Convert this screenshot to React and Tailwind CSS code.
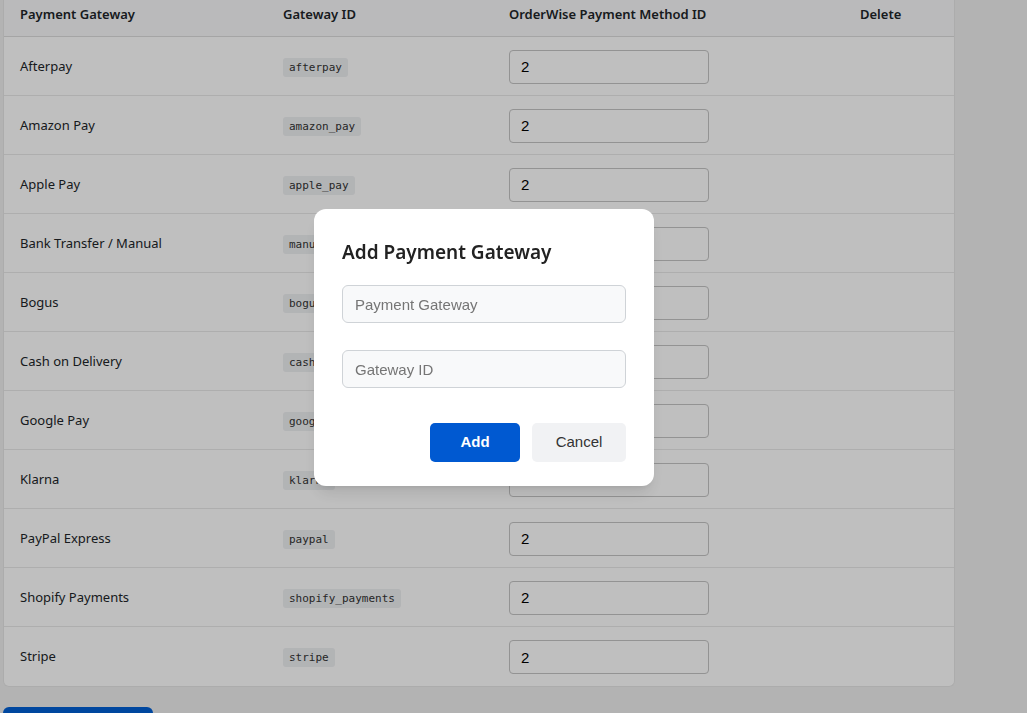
import React from "react";

const rows = [
  ["Afterpay", "afterpay"],
  ["Amazon Pay", "amazon_pay"],
  ["Apple Pay", "apple_pay"],
  ["Bank Transfer / Manual", "manual"],
  ["Bogus", "bogus"],
  ["Cash on Delivery", "cash_on_delivery"],
  ["Google Pay", "google_pay"],
  ["Klarna", "klarna"],
  ["PayPal Express", "paypal"],
  ["Shopify Payments", "shopify_payments"],
  ["Stripe", "stripe"],
];

export default function App() {
  return (
    <div className="relative min-h-[713px] bg-[#efefef] pl-[3px] overflow-hidden" style={{ fontFamily: '"Noto Sans", "Open Sans", sans-serif' }}>
      <div className="w-[952px] bg-white rounded-b-[6px] border-x border-b border-[#e6e6e6] text-[13px] text-[#212529]">
        <div className="flex h-[37px] items-start pt-[4px] leading-[20px] bg-[#f8f9fa] border-b border-[#dcdcdc] font-semibold">
          <div className="w-[279px] pl-[16px]">Payment Gateway</div>
          <div className="w-[226px]">Gateway ID</div>
          <div className="w-[351px]">OrderWise Payment Method ID</div>
          <div>Delete</div>
        </div>
        {rows.map(([name, id], i) => (
          <div key={id} className={`flex h-[59px] items-center pt-[1px] ${i < rows.length - 1 ? "border-b border-[#e9e9e9]" : ""}`}>
            <div className="w-[279px] pl-[16px]">{name}</div>
            <div className="w-[226px]">
              <code className="bg-[#eef0f2] rounded-[3px] px-[6px] py-[3px] text-[11px] text-[#333]" style={{ fontFamily: '"DejaVu Sans Mono", monospace' }}>{id}</code>
            </div>
            <div className="w-[351px]">
              <input
                readOnly
                value="2"
                className="w-[200px] h-[34px] border border-[#c4c4c4] rounded-[4px] px-[11px] text-[15px] text-black bg-white outline-none"
                style={{ fontFamily: '"Liberation Sans", Arial, sans-serif' }}
              />
            </div>
            <div></div>
          </div>
        ))}
      </div>
      <div className="mt-[20px] w-[150px] h-[40px] rounded-t-[6px] bg-[#005fd4]"></div>

      <div className="fixed inset-0 bg-black/25">
        <div className="absolute left-[314px] top-[209px] w-[340px] bg-white rounded-[12px] px-[28px] pt-[31px] pb-[24px] shadow-lg">
          <h2 className="text-[19px] leading-[24px] font-semibold text-[#222]">Add Payment Gateway</h2>
          <div style={{ fontFamily: '"Liberation Sans", Arial, sans-serif' }}>
            <input
              placeholder="Payment Gateway"
              className="mt-[21px] block w-full h-[38px] bg-[#f8f9fa] border border-[#cfd3d7] rounded-[6px] px-[12px] text-[15px] text-[#222] placeholder:text-[#757575] outline-none"
            />
            <input
              placeholder="Gateway ID"
              className="mt-[27px] block w-full h-[38px] bg-[#f8f9fa] border border-[#cfd3d7] rounded-[6px] px-[12px] text-[15px] text-[#222] placeholder:text-[#757575] outline-none"
            />
            <div className="mt-[35px] flex justify-end gap-[12px]">
              <button className="w-[90px] h-[39px] rounded-[5px] bg-[#0059d1] text-white text-[15px] font-bold">Add</button>
              <button className="w-[94px] h-[39px] rounded-[5px] bg-[#f1f2f4] text-[#333] text-[15px]">Cancel</button>
            </div>
          </div>
        </div>
      </div>
    </div>
  );
}
